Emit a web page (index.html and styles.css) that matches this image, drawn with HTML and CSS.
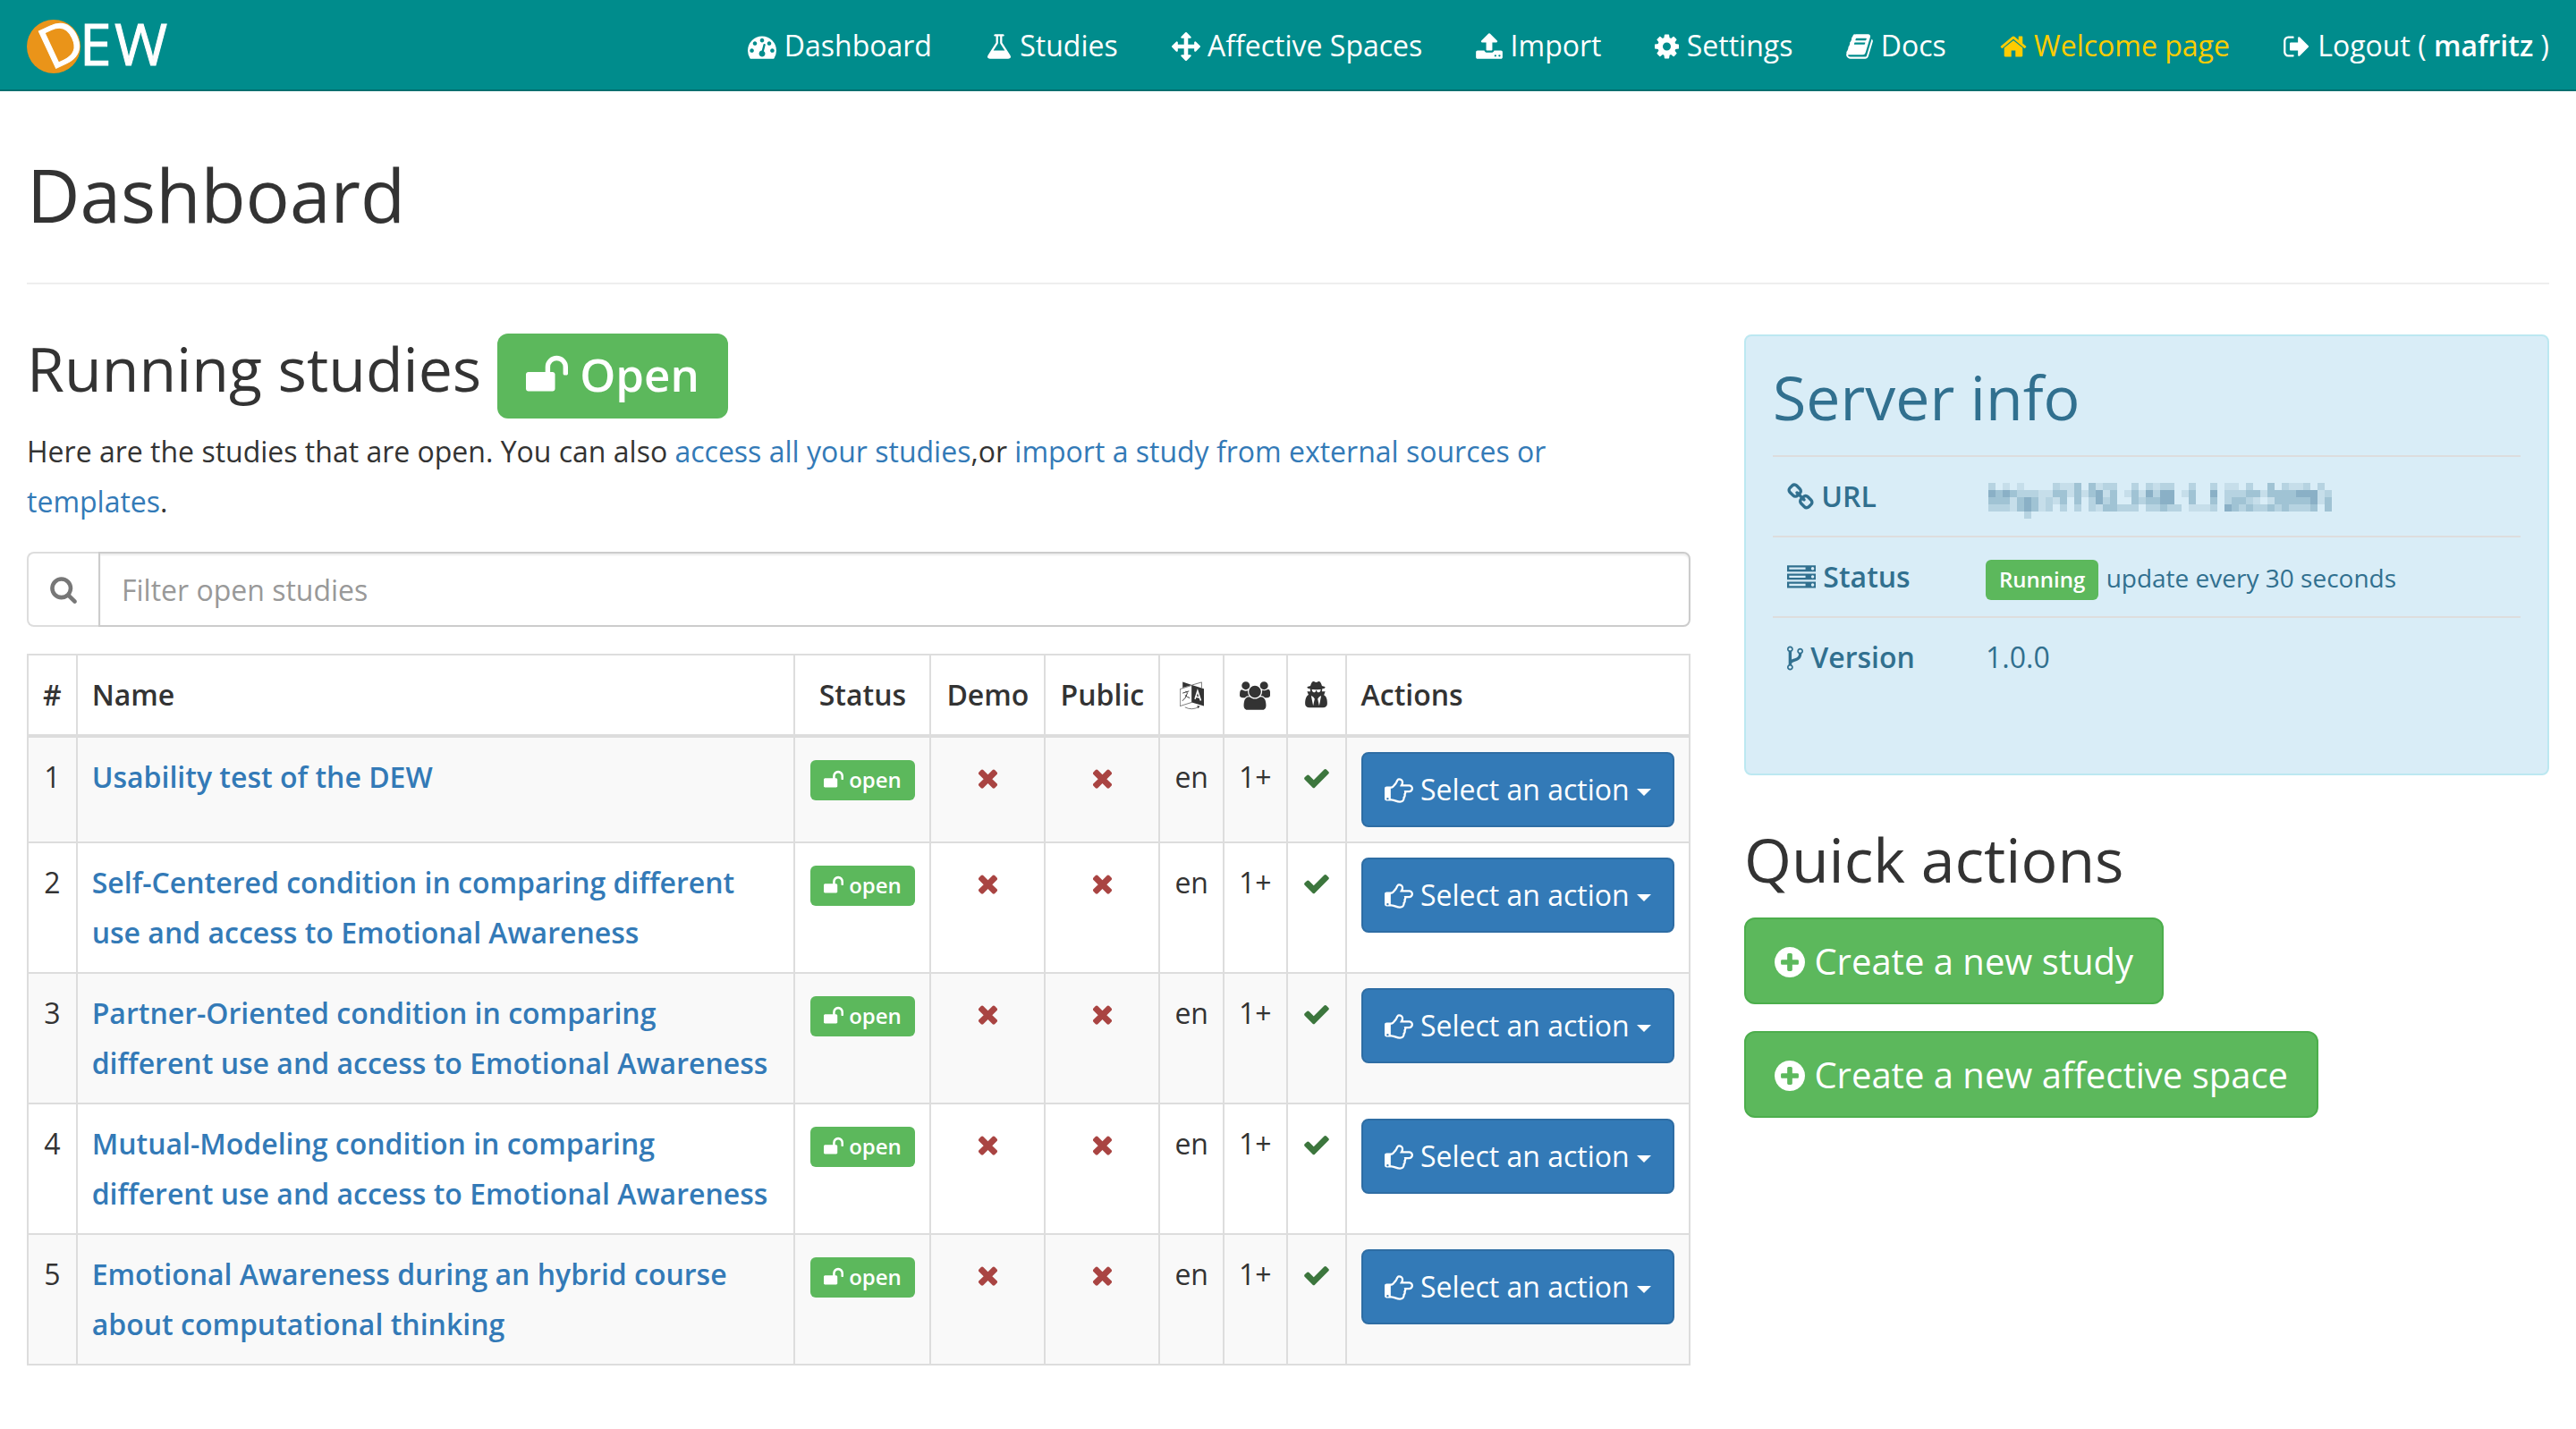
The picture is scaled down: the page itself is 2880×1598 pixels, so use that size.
FILE: index.html
```html
<!DOCTYPE html>
<html lang="en">
<head>
<meta charset="utf-8">
<title>Dashboard - DEW</title>
<link rel="stylesheet" href="styles.css">
</head>
<body>
<svg class="sprite" aria-hidden="true">
  <symbol id="tachometer" viewBox="0 0 1792 1792"><path d="M384 1152q0-53-37.5-90.5t-90.5-37.5-90.5 37.5-37.5 90.5 37.5 90.5 90.5 37.5 90.5-37.5 37.5-90.5zm192-448q0-53-37.5-90.5t-90.5-37.5-90.5 37.5-37.5 90.5 37.5 90.5 90.5 37.5 90.5-37.5 37.5-90.5zm428 481l101-382q6-26-7.5-48.5t-38.5-29.5-48 6.5-30 39.5l-101 382q-60 5-107 43.5t-63 98.5q-20 77 20 146t117 89 146-20 89-117q16-60-6-117t-72-91zm660-33q0-53-37.5-90.5t-90.5-37.5-90.5 37.5-37.5 90.5 37.5 90.5 90.5 37.5 90.5-37.5 37.5-90.5zm-640-640q0-53-37.5-90.5t-90.5-37.5-90.5 37.5-37.5 90.5 37.5 90.5 90.5 37.5 90.5-37.5 37.5-90.5zm448 192q0-53-37.5-90.5t-90.5-37.5-90.5 37.5-37.5 90.5 37.5 90.5 90.5 37.5 90.5-37.5 37.5-90.5zm320 448q0 261-141 483-19 29-54 29h-1402q-35 0-54-29-141-221-141-483 0-182 71-348t191-286 286-191 348-71 348 71 286 191 191 286 71 348z"/></symbol>
  <symbol id="flask" viewBox="64 0 1664 1792"><path d="M1591 1448q56 89 21.5 152.5t-140.5 63.5h-1152q-106 0-140.5-63.5t21.5-152.5l503-793v-399h-64q-26 0-45-19t-19-45 19-45 45-19h512q26 0 45 19t19 45-19 45-45 19h-64v399zm-779-725l-272 429h712l-272-429-20-31v-436h-128v436z"/></symbol>
  <symbol id="arrows" viewBox="0 0 1792 1792"><path d="M1792 896q0 26-19 45l-256 256q-19 19-45 19t-45-19-19-45v-128h-384v384h128q26 0 45 19t19 45-19 45l-256 256q-19 19-45 19t-45-19l-256-256q-19-19-19-45t19-45 45-19h128v-384h-384v128q0 26-19 45t-45 19-45-19l-256-256q-19-19-19-45t19-45l256-256q19-19 45-19t45 19 19 45v128h384v-384h-128q-26 0-45-19t-19-45 19-45l256-256q19-19 45-19t45 19l256 256q19 19 19 45t-19 45-45 19h-128v384h384v-128q0-26 19-45t45-19 45 19l256 256q19 19 19 45z"/></symbol>
  <symbol id="upload" viewBox="64 0 1664 1792"><path d="M1344 1472q0-26-19-45t-45-19-45 19-19 45 19 45 45 19 45-19 19-45zm256 0q0-26-19-45t-45-19-45 19-19 45 19 45 45 19 45-19 19-45zm128-224v320q0 40-28 68t-68 28h-1472q-40 0-68-28t-28-68v-320q0-40 28-68t68-28h427q21 56 70.5 92t110.5 36h256q61 0 110.5-36t70.5-92h427q40 0 68 28t28 68zm-325-648q-17 40-59 40h-256v448q0 26-19 45t-45 19h-256q-26 0-45-19t-19-45v-448h-256q-42 0-59-40-17-39 14-69l448-448q18-19 45-19t45 19l448 448q31 30 14 69z"/></symbol>
  <symbol id="cog" viewBox="128 0 1536 1792"><path d="M1152 896q0-106-75-181t-181-75-181 75-75 181 75 181 181 75 181-75 75-181zm512-109v222q0 12-8 23t-20 13l-185 28q-19 54-39 91 35 50 107 138 10 12 10 25t-9 23q-27 37-99 108t-94 71q-12 0-26-9l-138-108q-44 23-91 38-16 136-29 186-7 28-36 28h-222q-14 0-24.5-8.5t-11.5-21.5l-28-184q-49-16-90-37l-141 107q-10 9-25 9-14 0-25-11-126-114-165-168-7-10-7-23 0-12 8-23 15-21 51-66.5t54-70.5q-27-50-41-99l-183-27q-13-2-21-12.5t-8-23.5v-222q0-12 8-23t19-13l186-28q14-46 39-92-40-57-107-138-10-12-10-24 0-10 9-23 26-36 98.5-107.5t94.5-71.5q13 0 26 10l138 107q44-23 91-38 16-136 29-186 7-28 36-28h222q14 0 24.5 8.5t11.5 21.5l28 184q49 16 90 37l142-107q9-9 24-9 13 0 25 10 129 119 165 170 7 8 7 22 0 12-8 23-15 21-51 66.5t-54 70.5q26 50 41 98l183 28q13 2 21 12.5t8 23.5z"/></symbol>
  <symbol id="book" viewBox="64 0 1664 1792"><path d="M1703 478q40 57 18 129l-275 906q-19 64-76.5 107.5t-122.5 43.5h-923q-77 0-148.5-53.5t-99.5-131.5q-24-67-2-127 0-4 3-27t4-37q1-8-3-21.5t-3-19.5q2-11 8-21t16.5-23.5 16.5-23.5q23-38 45-91.5t30-91.5q3-10 .5-30t-.5-28q3-11 17-28t17-23q21-36 42-92t25-90q1-9-2.5-32t.5-28q4-13 22-30.5t22-22.5q19-26 42.5-84.5t27.5-96.5q1-8-3-25.5t-2-26.5q2-8 9-18t18-23 17-21q8-12 16.5-30.5t15-35 16-36 19.5-32 26.5-23.5 36-11.5 47.5 5.5l-1 3q38-9 51-9h761q74 0 114 56t18 130l-274 906q-36 119-71.5 153.5t-128.5 34.5h-869q-27 0-38 15-11 16-1 43 24 70 144 70h923q29 0 56-15.5t35-41.5l300-987q7-22 5-57 38 15 59 43zm-1064 2q-4 13 2 22.5t20 9.5h608q13 0 25.5-9.5t16.5-22.5l21-64q4-13-2-22.5t-20-9.5h-608q-13 0-25.5 9.5t-16.5 22.5zm-83 256q-4 13 2 22.5t20 9.5h608q13 0 25.5-9.5t16.5-22.5l21-64q4-13-2-22.5t-20-9.5h-608q-13 0-25.5 9.5t-16.5 22.5z"/></symbol>
  <symbol id="home" viewBox="64 0 1664 1792"><path d="M1472 992v480q0 26-19 45t-45 19h-384v-384h-256v384h-384q-26 0-45-19t-19-45v-480q0-1 .5-3t.5-3l575-474 575 474q1 2 1 6zm223-69l-62 74q-8 9-21 11h-3q-13 0-21-7l-692-577-692 577q-12 8-24 7-13-2-21-11l-62-74q-8-10-7-23.5t11-21.5l719-599q32-26 76-26t76 26l244 204v-195q0-14 9-23t23-9h192q14 0 23 9t9 23v408l219 182q10 8 11 21.5t-7 23.5z"/></symbol>
  <symbol id="sign-out" viewBox="64 0 1664 1792"><path d="M704 1440q0 4 1 20t.5 26.5-3 23.5-10 19.5-20.5 6.5h-320q-119 0-203.5-84.5t-84.5-203.5v-704q0-119 84.5-203.5t203.5-84.5h320q13 0 22.5 9.5t9.5 22.5q0 4 1 20t.5 26.5-3 23.5-10 19.5-20.5 6.5h-320q-66 0-113 47t-47 113v704q0 66 47 113t113 47h312l11.5 1 11.5 3 8 5.5 7 9 2 13.5zm928-544q0 26-19 45l-544 544q-19 19-45 19t-45-19-19-45v-288h-448q-26 0-45-19t-19-45v-384q0-26 19-45t45-19h448v-288q0-26 19-45t45-19 45 19l544 544q19 19 19 45z"/></symbol>
  <symbol id="unlock" viewBox="64 0 1664 1792"><path d="M1728 576v256q0 26-19 45t-45 19h-64q-26 0-45-19t-19-45v-256q0-106-75-181t-181-75-181 75-75 181v192h96q40 0 68 28t28 68v576q0 40-28 68t-68 28h-960q-40 0-68-28t-28-68v-576q0-40 28-68t68-28h672v-192q0-185 131.5-316.5t316.5-131.5 316.5 131.5 131.5 316.5z"/></symbol>
  <symbol id="search" viewBox="64 0 1664 1792"><path d="M1216 832q0-185-131.5-316.5t-316.5-131.5-316.5 131.5-131.5 316.5 131.5 316.5 316.5 131.5 316.5-131.5 131.5-316.5zm512 832q0 52-38 90t-90 38q-54 0-90-38l-343-342q-179 124-399 124-143 0-273.5-55.5t-225-150-150-225-55.5-273.5 55.5-273.5 150-225 225-150 273.5-55.5 273.5 55.5 225 150 150 225 55.5 273.5q0 220-124 399l343 343q37 37 37 90z"/></symbol>
  <symbol id="times" viewBox="192 0 1408 1792"><path d="M1490 1322q0 40-28 68l-136 136q-28 28-68 28t-68-28l-294-294-294 294q-28 28-68 28t-68-28l-136-136q-28-28-28-68t28-68l294-294-294-294q-28-28-28-68t28-68l136-136q28-28 68-28t68 28l294 294 294-294q28-28 68-28t68 28l136 136q28 28 28 68t-28 68l-294 294 294 294q28 28 28 68z"/></symbol>
  <symbol id="check" viewBox="0 0 1792 1792"><path d="M1671 566q0 40-28 68l-724 724-136 136q-28 28-68 28t-68-28l-136-136-362-362q-28-28-28-68t28-68l136-136q28-28 68-28t68 28l294 295 656-657q28-28 68-28t68 28l136 136q28 28 28 68z"/></symbol>
  <symbol id="plus-circle" viewBox="128 0 1536 1792"><path d="M1344 960v-128q0-26-19-45t-45-19h-256v-256q0-26-19-45t-45-19h-128q-26 0-45 19t-19 45v256h-256q-26 0-45 19t-19 45v128q0 26 19 45t45 19h256v256q0 26 19 45t45 19h128q26 0 45-19t19-45v-256h256q26 0 45-19t19-45zm320-64q0 209-103 385.5t-279.5 279.5-385.5 103-385.5-103-279.5-279.5-103-385.5 103-385.5 279.5-279.5 385.5-103 385.5 103 279.5 279.5 103 385.5z"/></symbol>
  <symbol id="chain" viewBox="64 0 1664 1792"><path d="M1520 1216q0-40-28-68l-208-208q-28-28-68-28-42 0-72 32 3 3 19 18.5t21.5 21.5 15 19 13 25.5 3.5 27.5q0 40-28 68t-68 28q-15 0-27.5-3.5t-25.5-13-19-15-21.5-21.5-18.5-19q-33 31-33 73 0 40 28 68l206 207q27 27 68 27 40 0 68-26l147-146q28-28 28-67zm-703-705q0-40-28-68l-206-207q-28-28-68-28-39 0-68 27l-147 146q-28 28-28 67 0 40 28 68l208 208q27 27 68 27 42 0 72-31-3-3-19-18.5t-21.5-21.5-15-19-13-25.5-3.5-27.5q0-40 28-68t68-28q15 0 27.5 3.5t25.5 13 19 15 21.5 21.5 18.5 19q33-31 33-73zm895 705q0 120-85 203l-147 146q-83 83-203 83-121 0-204-85l-206-207q-83-83-83-203 0-123 88-209l-88-88q-86 88-208 88-120 0-204-84l-208-208q-84-84-84-204t85-203l147-146q83-83 203-83 121 0 204 85l206 207q83 83 83 203 0 123-88 209l88 88q86-88 208-88 120 0 204 84l208 208q84 84 84 204z"/></symbol>
  <symbol id="server" viewBox="0 0 1792 1792"><path d="M128 1408h1024v-128h-1024v128zm0-512h1024v-128h-1024v128zm1568 448q0-40-28-68t-68-28-68 28-28 68 28 68 68 28 68-28 28-68zm-1568-960h1024v-128h-1024v128zm1568 448q0-40-28-68t-68-28-68 28-28 68 28 68 68 28 68-28 28-68zm0-512q0-40-28-68t-68-28-68 28-28 68 28 68 68 28 68-28 28-68zm96 832v384h-1792v-384h1792zm0-512v384h-1792v-384h1792zm0-512v384h-1792v-384h1792z"/></symbol>
  <symbol id="code-fork" viewBox="384 0 1024 1792"><path d="M672 1472q0-40-28-68t-68-28-68 28-28 68 28 68 68 28 68-28 28-68zm0-1152q0-40-28-68t-68-28-68 28-28 68 28 68 68 28 68-28 28-68zm640 128q0-40-28-68t-68-28-68 28-28 68 28 68 68 28 68-28 28-68zm96 0q0 52-26 96.5t-70 69.5q-2 287-226 414-67 38-203 81-128 40-169.5 71t-41.5 100v26q44 25 70 69.5t26 96.5q0 80-56 136t-136 56-136-56-56-136q0-52 26-96.5t70-69.5v-820q-44-25-70-69.5t-26-96.5q0-80 56-136t136-56 136 56 56 136q0 52-26 96.5t-70 69.5v497q54-26 154-57 55-17 87.5-29.5t70.5-31 59-39.5 40.5-51 28-69.5 8.5-91.5q-44-25-70-69.5t-26-96.5q0-80 56-136t136-56 136 56 56 136z"/></symbol>
  <symbol id="hand" viewBox="0 0 1792 1792"><path d="M256 1408q0-26-19-45t-45-19-45 19-19 45 19 45 45 19 45-19 19-45zm1408-640q0-51-39-89.5t-89-38.5h-576q0-20 15-48.5t33-55 33-68 15-84.5q0-67-44.5-97.5t-115.5-30.5q-24 0-90 139-24 44-37 65-40 64-112 145-71 81-101 106-69 57-140 57h-32v640h32q72 0 167 32t193.5 64 179.5 32q189 0 189-167 0-26-5-56 30-16 47.5-52.5t17.5-73.5-18-69q53-50 53-119 0-25-10-55.5t-25-47.5h331q52 0 90-38t38-90zm128-1q0 105-75.5 181t-180.5 76h-169q-4 62-37 119 3 21 3 43 0 101-60 178 1 139-85 219.5t-227 80.5q-133 0-322-69-164-59-223-59h-288q-53 0-90.5-37.5t-37.5-90.5v-640q0-53 37.5-90.5t90.5-37.5h288q10 0 21.5-4.5t23.5-14 22.5-18 24-22.5 20.5-21.5 19-21.5 14-17q65-74 100-129 13-21 33-62t37-72 40.5-63 55-49.5 69.5-17.5q125 0 206.5 67t81.5 189q0 68-22 128h374q104 0 180 76t76 179z"/></symbol>
  <symbol id="users" viewBox="-64 0 1920 1792"><path d="M529 896q-162 5-265 128h-134q-82 0-138-40.5t-56-118.5q0-353 124-353 6 0 43.5 21t97.5 42.5 119 21.5q67 0 133-23-5 37-5 66 0 159 93 288zm1071 637q0 120-73 189.5t-194 69.5h-874q-121 0-194-69.5t-73-189.5q0-53 3.5-103.5t14-109 26.5-108.5 43-97.5 62-81 85.5-53.5 111.5-20q10 0 43 21.5t73 48 107 48 135 21.5 135-21.5 107-48 73-48 43-21.5q61 0 111.5 20t85.5 53.5 62 81 43 97.5 26.5 108.5 14 109 3.5 103.5zm-1024-1277q0 106-75 181t-181 75-181-75-75-181 75-181 181-75 181 75 75 181zm704 384q0 159-112.5 271.5t-271.5 112.5-271.5-112.5-112.5-271.5 112.5-271.5 271.5-112.5 271.5 112.5 112.5 271.5zm576 225q0 78-56 118.5t-138 40.5h-134q-103-123-265-128 93-129 93-288 0-29-5-66 66 23 133 23 59 0 119-21.5t97.5-42.5 43.5-21q124 0 124 353zm-128-609q0 106-75 181t-181 75-181-75-75-181 75-181 181-75 181 75 75 181z"/></symbol>
  <symbol id="user-secret" viewBox="128 0 1536 1792"><path d="M704 1536l96-448-96-128-128-64zm384 0l128-640-128 64-96 128zm104-1028q-2-4-4-6-10-8-96-8-70 0-167 19-7 2-21 2t-21-2q-97-19-167-19-86 0-96 8-2 2-4 6 2 18 4 27 2 3 7.5 6.5t7.5 10.5q2 4 7.5 20.5t7 20.5 7.5 17 8.5 17 9 14 12 13.5 14 9.5 17.5 8 20.5 4 24.5 2q36 0 59-12.5t32.5-30 14.5-34.5 11.5-29.5 17.5-12.5h12q11 0 17.5 12.5t11.5 29.5 14.5 34.5 32.5 30 59 12.5q13 0 24.5-2t20.5-4 17.5-8 14-9.5 12-13.5 9-14 8.5-17 7.5-17 7-20.5 7.5-20.5q2-7 7.5-10.5t7.5-6.5q2-9 4-27zm408 879q0 121-73 190t-194 69h-874q-121 0-194-69t-73-190q0-61 4.5-118t19-125.5 37.5-123.5 63.5-103.5 93.5-74.5l-90-220h214q-22-64-22-128 0-12 2-32-194-40-194-96 0-57 210-99 17-62 51.5-134t70.5-114q32-37 76-37 30 0 84 31t84 31 84-31 84-31q44 0 76 37 36 42 70.5 114t51.5 134q210 42 210 99 0 56-194 96 7 81-20 160h214l-82 225q63 33 107.5 96.5t65.5 143.5 29 151.5 8 148.5z"/></symbol>
  <symbol id="language" viewBox="0 0 84 98">
    <path d="M10 1L42 12 10 21zM42 12L84 25V85L42 72z"/>
    <path fill="none" stroke="currentColor" stroke-width="2" d="M42 12L76 2V22M1 26L42 13V72L1 85zM18 89Q42 101 66 88"/>
    <path d="M60 84l10 1-6 8z"/>
    <path fill="none" stroke="currentColor" stroke-width="3" d="M10 40l22-7M21 33l3 5M27 38Q22 58 9 67M18 47Q26 54 35 57"/>
    <path fill="none" stroke="#fff" stroke-width="5" d="M53 61L62 32 73 66M55 52l13 3"/>
  </symbol>
</svg>

<header class="navbar">
  <a class="brand" href="#" aria-label="DEW">
    <svg class="logo" viewBox="0 0 170 76" role="img" aria-label="DEW">
      <circle class="logo-drop" cx="30" cy="38" r="30"/>
      <text class="logo-text" transform="translate(27 65) rotate(-25)">D</text>
      <text class="logo-text" y="59" x="59 98">EW</text>
    </svg>
  </a>
  <nav class="menu">
    <a href="#"><svg class="icon w32"><use href="#tachometer"/></svg> Dashboard</a>
    <a href="#"><svg class="icon w30"><use href="#flask"/></svg> Studies</a>
    <a href="#"><svg class="icon w32"><use href="#arrows"/></svg> Affective Spaces</a>
    <a href="#"><svg class="icon w30"><use href="#upload"/></svg> Import</a>
    <a href="#"><svg class="icon w27"><use href="#cog"/></svg> Settings</a>
    <a href="#"><svg class="icon w30"><use href="#book"/></svg> Docs</a>
    <a class="welcome" href="#"><svg class="icon w30"><use href="#home"/></svg> Welcome page</a>
    <a href="#"><svg class="icon w30"><use href="#sign-out"/></svg> Logout ( <strong>mafritz</strong> )</a>
  </nav>
</header>

<main class="page">
  <div class="page-header"><h1>Dashboard</h1></div>
  <div class="columns">
    <section class="studies">
      <h2>Running studies <span class="label label-big"><svg class="icon"><use href="#unlock"/></svg> Open</span></h2>
      <p>Here are the studies that are open. You can also <a href="#">access all your studies</a>,or <a href="#">import a study from external sources or templates</a>.</p>
      <div class="filter">
        <label for="filter"><svg class="icon w30"><use href="#search"/></svg></label>
        <input id="filter" type="text" placeholder="Filter open studies">
      </div>
      <table class="grid">
        <thead>
          <tr>
            <th>#</th>
            <th class="name">Name</th>
            <th class="status">Status</th>
            <th class="flag">Demo</th>
            <th class="flag">Public</th>
            <th><svg class="icon w27"><use href="#language"/></svg></th>
            <th><svg class="icon w34"><use href="#users"/></svg></th>
            <th><svg class="icon w27"><use href="#user-secret"/></svg></th>
            <th class="actions">Actions</th>
          </tr>
        </thead>
        <tbody>
          <tr>
            <td>1</td>
            <td class="name"><a href="#">Usability test of the DEW</a></td>
            <td><span class="label"><svg class="icon"><use href="#unlock"/></svg> open</span></td>
            <td class="no"><svg class="icon w25"><use href="#times"/></svg></td>
            <td class="no"><svg class="icon w25"><use href="#times"/></svg></td>
            <td>en</td>
            <td>1+</td>
            <td class="yes"><svg class="icon w32"><use href="#check"/></svg></td>
            <td class="actions"><button class="btn" type="button"><svg class="icon w32"><use href="#hand"/></svg> Select an action <span class="caret"></span></button></td>
          </tr>
          <tr>
            <td>2</td>
            <td class="name"><a href="#">Self-Centered condition in comparing different use and access to Emotional Awareness</a></td>
            <td><span class="label"><svg class="icon"><use href="#unlock"/></svg> open</span></td>
            <td class="no"><svg class="icon w25"><use href="#times"/></svg></td>
            <td class="no"><svg class="icon w25"><use href="#times"/></svg></td>
            <td>en</td>
            <td>1+</td>
            <td class="yes"><svg class="icon w32"><use href="#check"/></svg></td>
            <td class="actions"><button class="btn" type="button"><svg class="icon w32"><use href="#hand"/></svg> Select an action <span class="caret"></span></button></td>
          </tr>
          <tr>
            <td>3</td>
            <td class="name"><a href="#">Partner-Oriented condition in comparing different use and access to Emotional Awareness</a></td>
            <td><span class="label"><svg class="icon"><use href="#unlock"/></svg> open</span></td>
            <td class="no"><svg class="icon w25"><use href="#times"/></svg></td>
            <td class="no"><svg class="icon w25"><use href="#times"/></svg></td>
            <td>en</td>
            <td>1+</td>
            <td class="yes"><svg class="icon w32"><use href="#check"/></svg></td>
            <td class="actions"><button class="btn" type="button"><svg class="icon w32"><use href="#hand"/></svg> Select an action <span class="caret"></span></button></td>
          </tr>
          <tr>
            <td>4</td>
            <td class="name"><a href="#">Mutual-Modeling condition in comparing different use and access to Emotional Awareness</a></td>
            <td><span class="label"><svg class="icon"><use href="#unlock"/></svg> open</span></td>
            <td class="no"><svg class="icon w25"><use href="#times"/></svg></td>
            <td class="no"><svg class="icon w25"><use href="#times"/></svg></td>
            <td>en</td>
            <td>1+</td>
            <td class="yes"><svg class="icon w32"><use href="#check"/></svg></td>
            <td class="actions"><button class="btn" type="button"><svg class="icon w32"><use href="#hand"/></svg> Select an action <span class="caret"></span></button></td>
          </tr>
          <tr>
            <td>5</td>
            <td class="name"><a href="#">Emotional Awareness during an hybrid course about computational thinking</a></td>
            <td><span class="label"><svg class="icon"><use href="#unlock"/></svg> open</span></td>
            <td class="no"><svg class="icon w25"><use href="#times"/></svg></td>
            <td class="no"><svg class="icon w25"><use href="#times"/></svg></td>
            <td>en</td>
            <td>1+</td>
            <td class="yes"><svg class="icon w32"><use href="#check"/></svg></td>
            <td class="actions"><button class="btn" type="button"><svg class="icon w32"><use href="#hand"/></svg> Select an action <span class="caret"></span></button></td>
          </tr>
        </tbody>
      </table>
    </section>

    <aside class="side">
      <section class="server">
        <h2>Server info</h2>
        <table class="info">
          <tr><th><svg class="icon w30"><use href="#chain"/></svg> URL</th><td>
            <svg class="mosaic" viewBox="0 0 387 40" role="img" aria-label="Hidden address">
              <g transform="translate(3) scale(8)" fill="none">
                <path class="m1" d="M2 .5h1M4 .5h1M10 .5h2M15 .5h1M23 .5h1M33 .5h2M42 .5h2M7 1.5h2M11 1.5h1M13 1.5h1M16 1.5h1M19 1.5h1M21 1.5h1M27 1.5h1M38 1.5h1M46 1.5h1M3 2.5h1M7 2.5h1M9 2.5h1M37 2.5h1M39 2.5h1M46 2.5h1M3 3.5h1M7 3.5h1M15 3.5h1M28 3.5h3"/>
                <path class="m2" d="M0 .5h1M9 .5h1M16 .5h2M20 .5h1M22 .5h1M24 .5h2M28 .5h1M31 .5h1M36 .5h1M41 .5h1M44 .5h1M46 .5h1M4 1.5h3M23 1.5h1M33 1.5h3M47 1.5h1M8 2.5h1M14 2.5h1M16 2.5h1M21 2.5h1M33 2.5h1M36 2.5h1M0 3.5h3M8 3.5h1M10 3.5h1M12 3.5h1M14 3.5h1M18 3.5h2M20 3.5h1M22 3.5h2M25 3.5h2M31 3.5h1M35 3.5h1M37 3.5h2M40 3.5h1M42 3.5h3M5 4.5h1"/>
                <path class="m3" d="M12 .5h1M14 .5h1M39 .5h1M1 1.5h1M3 1.5h1M9 1.5h2M12 1.5h1M14 1.5h1M17 1.5h1M20 1.5h1M28 1.5h1M36 1.5h2M39 1.5h4M0 2.5h3M4 2.5h1M6 2.5h1M10 2.5h1M12 2.5h1M17 2.5h1M20 2.5h1M22 2.5h2M28 2.5h1M31 2.5h1M34 2.5h2M40 2.5h5M47 2.5h1M4 3.5h1M6 3.5h1M16 3.5h2M24 3.5h1M34 3.5h1M36 3.5h1M39 3.5h1M41 3.5h1M45 3.5h1M47 3.5h1"/>
                <path class="m4" d="M0 1.5h1M2 1.5h1M15 1.5h1M22 1.5h1M24 1.5h2M31 1.5h1M43 1.5h3M5 2.5h1M15 2.5h1M24 2.5h2M45 2.5h1M5 3.5h1M33 3.5h1"/>
              </g>
            </svg>
          </td></tr>
          <tr><th><svg class="icon w32"><use href="#server"/></svg> Status</th><td><span class="label">Running</span> <small>update every 30 seconds</small></td></tr>
          <tr><th><svg class="icon w18"><use href="#code-fork"/></svg> Version</th><td>1.0.0</td></tr>
        </table>
      </section>
      <section class="quick">
        <h2>Quick actions</h2>
        <button class="btn btn-large" type="button"><svg class="icon"><use href="#plus-circle"/></svg> Create a new study</button>
        <button class="btn btn-large" type="button"><svg class="icon"><use href="#plus-circle"/></svg> Create a new affective space</button>
      </section>
    </aside>
  </div>
</main>
</body>
</html>
```
FILE: styles.css
```css
* {
  box-sizing: border-box;
}

body {
  margin: 0;
  background: #fff;
  color: #333;
  font: 32px/56px "Open Sans", sans-serif;
}

a {
  color: #337ab7;
  text-decoration: none;
}

strong,
th {
  font-weight: 600;
}

h1,
h2 {
  margin: 0 0 28px;
  font-weight: 400;
}

h1 {
  font-size: 82px;
  line-height: 90px;
}

h2 {
  font-size: 68px;
  line-height: 75px;
}

p {
  margin: 0 0 28px;
}

/* Icons */
.sprite {
  display: none;
}

.icon {
  height: 32px;
  fill: currentColor;
  vertical-align: -5px;
}

.w18 { width: 18px; }
.w25 { width: 25px; }
.w27 { width: 27px; }
.w30 { width: 30px; }
.w32 { width: 32px; }
.w34 { width: 34px; }

/* Top bar */
.navbar {
  display: flex;
  justify-content: space-between;
  background: #008c8c;
  border-bottom: 2px solid #007070;
}

.brand {
  display: flex;
  align-items: center;
  padding: 4px 0 0 30px;
}

.logo {
  width: 170px;
  height: 76px;
  overflow: visible;
}

.logo-drop {
  fill: #ea9419;
}

.logo-text {
  fill: #fff;
  stroke: #fff;
  stroke-width: 1px;
  font-size: 64px;
}

.menu {
  display: flex;
}

.menu a {
  padding: 23px 30px 21px;
  color: #fff;
  white-space: nowrap;
}

.menu .welcome {
  color: #fc0;
}

/* Page */
.page {
  padding: 70px 30px 56px;
}

.page-header {
  margin-bottom: 56px;
  padding-bottom: 26px;
  border-bottom: 2px solid #eee;
}

.columns {
  display: grid;
  grid-template-columns: minmax(0, 31fr) minmax(0, 15fr);
  gap: 60px;
  align-items: start;
}

.label {
  padding: 5px 15px 7px;
  border-radius: 6px;
  background: #5cb85c;
  color: #fff;
  font-size: 24px;
  font-weight: 600;
  line-height: 24px;
  white-space: nowrap;
}

.label .icon {
  width: 22px;
  height: 24px;
  vertical-align: -3px;
}

.label-big {
  padding: 10px 32px 15px;
  border-radius: 12px;
  font-size: 51px;
  line-height: 51px;
}

.label-big .icon {
  width: 47px;
  height: 51px;
  vertical-align: -7px;
}

/* Filter */
.filter {
  display: flex;
  margin-bottom: 30px;
}

.filter label {
  display: flex;
  align-items: center;
  padding: 0 24px;
  border: 2px solid #ddd;
  border-right: 0;
  border-radius: 8px 0 0 8px;
  color: #777;
}

.filter input {
  flex: 1;
  min-width: 0;
  height: 84px;
  padding: 12px 24px;
  border: 2px solid #ccc;
  border-radius: 0 8px 8px 0;
  background: #fff;
  box-shadow: inset 0 2px 2px rgba(0, 0, 0, .075);
  color: #555;
  font: inherit;
}

.filter input::placeholder {
  color: #999;
  opacity: 1;
}

/* Studies table */
.grid {
  width: 100%;
  border-collapse: collapse;
}

.grid th,
.grid td {
  width: 1px;
  padding: 16px;
  border: 2px solid #ddd;
  text-align: center;
  vertical-align: top;
  white-space: nowrap;
}

.grid th {
  border-bottom-width: 4px;
}

.grid .status {
  width: 152px;
}

.grid .flag {
  width: 128px;
}

.grid tbody tr:nth-child(odd) {
  background: #f9f9f9;
}

.grid .name {
  width: auto;
  text-align: left;
  white-space: normal;
}

.name a {
  font-weight: 600;
}

.grid .actions {
  text-align: left;
}

.no {
  color: #a94442;
}

.yes {
  color: #3c763d;
}

/* Buttons */
.btn {
  display: block;
  padding: 12px 24px;
  border: 2px solid #2e6da4;
  border-radius: 8px;
  background: #337ab7;
  color: #fff;
  font: inherit;
  white-space: nowrap;
}

.caret {
  display: inline-block;
  border: 8px solid transparent;
  border-top-color: #fff;
  border-bottom: 0;
  vertical-align: middle;
}

.btn-large {
  margin-bottom: 30px;
  padding: 20px 32px;
  border-color: #4cae4c;
  border-radius: 12px;
  background: #5cb85c;
  font-size: 40px;
  line-height: 53px;
}

.btn-large .icon {
  width: 34px;
  height: 40px;
  vertical-align: -6px;
}

/* Server info */
.server {
  margin-bottom: 56px;
  padding: 30px;
  border: 2px solid #bce8f1;
  border-radius: 8px;
  background: #d9edf7;
  color: #31708f;
}

.info {
  width: 100%;
  margin-bottom: 56px;
  border-collapse: separate;
  border-spacing: 0;
  text-align: left;
}

.info th,
.info td {
  padding: 16px;
  border-top: 2px solid #ddd;
  vertical-align: top;
}

.info th {
  width: 222px;
}

.info small {
  font-size: 28px;
  line-height: 28px;
}

/* Masked address: one square per block, darker from m1 to m4 */
.mosaic {
  width: 387px;
  height: 40px;
  vertical-align: -13px;
  shape-rendering: crispEdges;
}

.m1 { stroke: #c6deea; }
.m2 { stroke: #b6d3e1; }
.m3 { stroke: #a0c3d4; }
.m4 { stroke: #8ab0c6; }
```
